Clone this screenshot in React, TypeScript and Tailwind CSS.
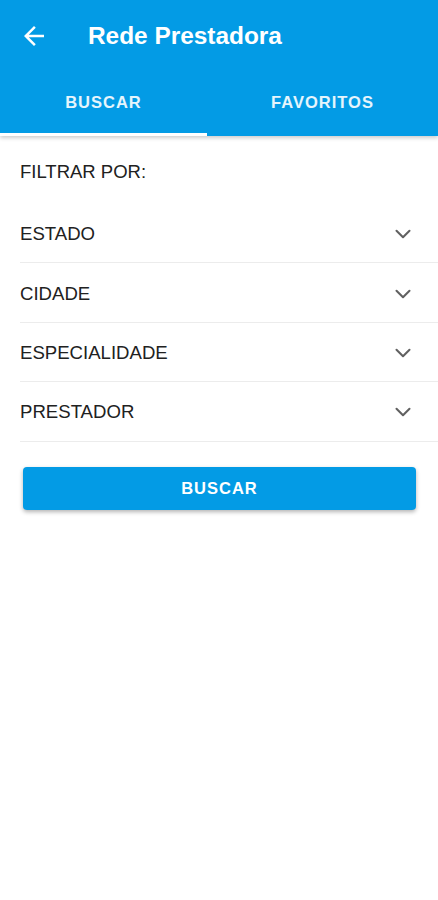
import { ChevronDown } from 'lucide-react'

const filters = ['ESTADO', 'CIDADE', 'ESPECIALIDADE', 'PRESTADOR']

const BackArrow = () => (
  <svg width="30" height="30" viewBox="0 0 24 24" fill="white">
    <path d="M20 11H7.83l5.59-5.59L12 4l-8 8 8 8 1.41-1.41L7.83 13H20v-2z" />
  </svg>
)

const App = () => {
  return (
    <div className="min-h-[900px] bg-white font-['Liberation_Sans',Arial,sans-serif]">
      {/* Header */}
      <header className="bg-[#039be5] shadow-[0_2px_4px_rgba(0,0,0,0.2)]">
        <div className="flex h-[72px] items-center">
          <div className="ml-[19px] flex w-[30px] items-center">
            <BackArrow />
          </div>
          <h1 className="ml-[39px] text-[24.4px] font-bold text-white">Rede Prestadora</h1>
        </div>
        <nav className="flex h-[64px]">
          <div className="flex w-[207px] flex-col">
            <div className="flex flex-1 items-center justify-center text-[16.5px] font-bold tracking-[1px] text-white/90">
              BUSCAR
            </div>
            <div className="h-[3px] bg-white" />
          </div>
          <div className="flex flex-1 flex-col">
            <div className="flex flex-1 items-center justify-center text-[16.5px] font-bold tracking-[1px] text-white/90">
              FAVORITOS
            </div>
            <div className="h-[3px]" />
          </div>
        </nav>
      </header>

      {/* Filters */}
      <main className="pt-[24px]">
        <p className="pl-[20px] text-[18.5px] leading-[24px] text-[#212121]">FILTRAR POR:</p>
        <ul className="mt-[20px] pl-[20px]">
          {filters.map((f) => (
            <li
              key={f}
              className="flex h-[59.4px] items-center justify-between border-b border-[#ececec] pt-[2px] pr-[22px] text-[18.6px] text-[#212121]"
            >
              <span>{f}</span>
              <ChevronDown className="h-[26px] w-[26px] text-[#616161]" strokeWidth={1.9} />
            </li>
          ))}
        </ul>
        <div className="mt-[25px] ml-[23px] mr-[22px]">
          <button className="flex h-[43px] w-full items-center justify-center rounded-[4px] bg-[#039be5] text-[16.5px] font-bold tracking-[1px] text-white shadow-[0_2px_4px_rgba(0,0,0,0.3)]">
            BUSCAR
          </button>
        </div>
      </main>
    </div>
  )
}

export default App
